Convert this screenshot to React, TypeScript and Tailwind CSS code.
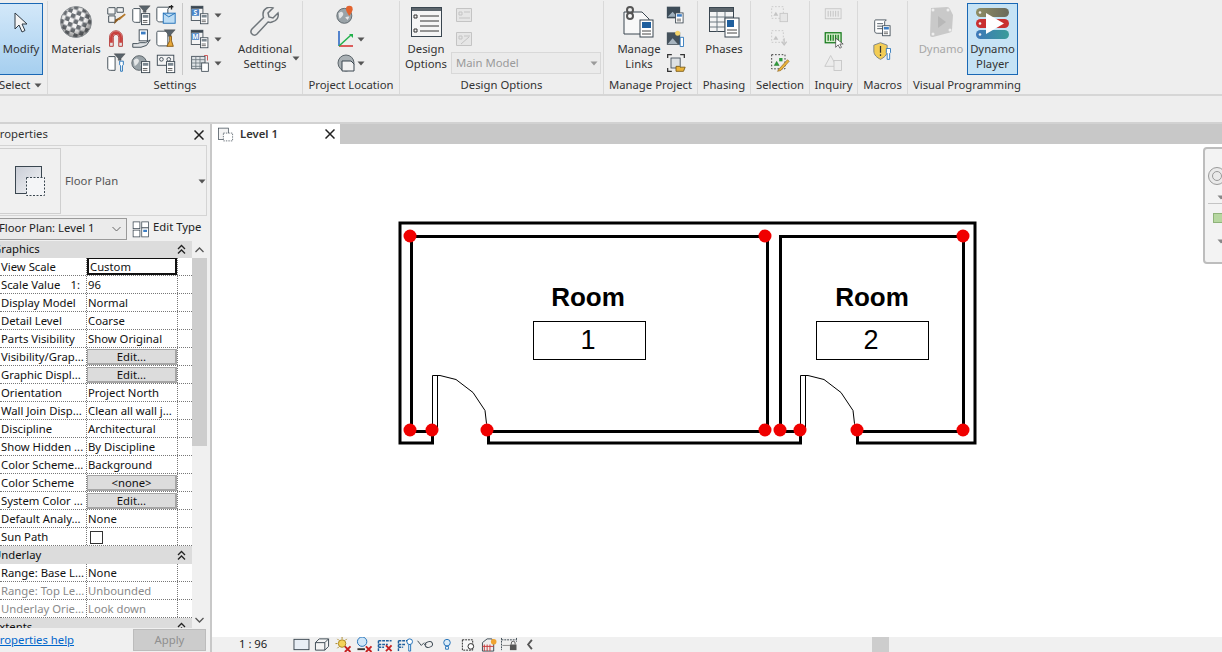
import React from 'react';

const font = "font-['Noto_Sans','Liberation_Sans',sans-serif]";

const Arrow = ({ color = '#555' }: { color?: string }) => (
  <svg width="8" height="5" viewBox="0 0 8 5" className="shrink-0">
    <path d="M0.5 0.5H7.5L4 4.5Z" fill={color} />
  </svg>
);

const Badge = ({ x = 12, y = 10, color = '#3b7dc4' }: { x?: number; y?: number; color?: string }) => (
  <g>
    <rect x={x + 0.5} y={y + 0.5} width="9" height="12" fill="#fff" stroke="#3a4650" />
    <rect x={x + 2} y={y + 2} width="6" height="3" fill={color} />
    <path d={`M${x + 2} ${y + 8}h5M${x + 2} ${y + 10}h5`} stroke="#555" />
  </g>
);

const Scroll = () => (
  <path d="M3 3.5h13l-2 2v14H5c-2 0-3-1-3-2.5V5c0-1 .5-1.5 1-1.5z" fill="#fff" stroke="#3a4650" />
);

const Funnel = ({ color = '#59636b' }: { color?: string }) => (
  <path d="M10 2h12l-4.5 5v2h-3V7z" fill={color} stroke="#444" strokeWidth="0.5" />
);

const Globe = ({ x = 12, y = 12, r = 8 }: { x?: number; y?: number; r?: number }) => (
  <g>
    <circle cx={x} cy={y} r={r} fill="#9aa3a8" stroke="#565f65" />
    <path d={`M${x - r + 2} ${y - 3}q3-3 5-1t-1 5-3 2zM${x + 1} ${y + 2}q3-2 5-1l-2 4z`} fill="#e4e6e7" />
  </g>
);

const Ic = ({ children, s = 24 }: { children: React.ReactNode; s?: number }) => (
  <svg width={s} height={s} viewBox="0 0 24 24" className="shrink-0">
    {children}
  </svg>
);

const settingsIcons: React.ReactNode[] = [
  <>
    <path d="M4 4h7v7H3V5zM13 4h7v5h-7zM4 13h7v7H4z" fill="#f4f4f4" stroke="#3a4650" />
    <path d="M22 11 13 19l-3 3 1-5 2-1z" fill="#8a5a22" />
    <path d="M22 11 15 17" stroke="#b5792b" strokeWidth="2" />
  </>,
  <>
    <path d="M4 5h7v15H6c-2 0-3-1-3-2V6z" fill="#fff" stroke="#3a4650" />
    <Funnel />
    <Badge x={12} y={10} color="#7b8790" />
  </>,
  <>
    <Scroll />
    <path d="M15 3h5M18 1v5" stroke="#222" strokeWidth="1.5" />
    <rect x="9" y="10" width="13" height="11" fill="#bcdcf4" stroke="#1f6fb7" />
    <path d="M9 10l6 4 7-4" fill="none" stroke="#1f6fb7" />
  </>,
  <>
    <path d="M5 20V10a7 7 0 0 1 14 0v10h-4V10a3 3 0 0 0-6 0v10z" fill="#e4e4e4" stroke="#b4302e" />
    <path d="M5.5 16V10a6.500 6.500 0 0 1 13 0v6h-3V10a3.500 3.500 0 0 0-7 0v6z" fill="#c9403d" />
  </>,
  <>
    <rect x="10" y="2" width="9" height="12" fill="#fff" stroke="#3a4650" />
    <rect x="12" y="4" width="5" height="3" fill="#3b7dc4" />
    <path d="M3 17h5l3-1h6l5-3-4 6-6 2H3z" fill="#dfe2e4" stroke="#3a4650" />
  </>,
  <>
    <Scroll />
    <Funnel />
    <path d="M16 9v5l-3 6h7l-2-6V9z" fill="#e8a93a" stroke="#8a5a12" />
  </>,
  <>
    <path d="M4 5h7v15H6c-2 0-3-1-3-2V6z" fill="#fff" stroke="#3a4650" />
    <Funnel />
    <path d="M16 10h4v4l-1 1v6h-2v-6l-1-1z" fill="#fff" stroke="#1f6fb7" />
  </>,
  <>
    <Globe x={10} y={12} r={8} />
    <Badge x={12} y={10} color="#7b8790" />
  </>,
  <>
    <rect x="2.500" y="3.500" width="18" height="11" fill="#f4f4f4" stroke="#3a4650" />
    <circle cx="7" cy="8" r="2" fill="none" stroke="#3a4650" />
    <circle cx="15" cy="8" r="2" fill="none" stroke="#3a4650" />
    <Badge x={12} y={10} color="#7b8790" />
  </>,
];

const Panel = ({ w, label, children }: { w: string; label: string; children: React.ReactNode }) => (
  <div className={`${w} shrink-0 flex flex-col border-r border-[#d9d9d9] h-[93px] mt-[1px]`}>
    <div className="flex h-[76px] pt-[2px] overflow-visible">{children}</div>
    <div className="text-center text-[11.3px] leading-[16px] text-[#333] whitespace-nowrap">{label}</div>
  </div>
);

const Large = ({ w, icon, lines, muted }: { w: string; icon: React.ReactNode; lines: string[]; muted?: boolean }) => (
  <div className={`${w} shrink-0 flex flex-col items-center`}>
    <div className="h-[38px] flex items-center justify-center">{icon}</div>
    {lines.map((l) => (
      <div key={l} className={`text-[11.3px] leading-[15px] whitespace-nowrap ${muted ? 'text-[#a8a8a8]' : 'text-[#333]'}`}>
        {l}
      </div>
    ))}
  </div>
);

const SmallCol = ({ w, items }: { w: string; items: React.ReactNode[] }) => (
  <div className={`${w} shrink-0 flex flex-col`}>
    {items.map((it, i) => (
      <div key={i} className="h-[24px] flex items-center justify-center">
        {it}
      </div>
    ))}
  </div>
);

const DropRow = ({ children }: { children: React.ReactNode }) => (
  <div className="h-[24px] flex items-center">
    <div className="w-[26px] flex justify-center">{children}</div>
    <div className="ml-[1px]">
      <Arrow />
    </div>
  </div>
);

const dim = '#c4c4c4';

const SheetIcon = ({ letter }: { letter: string }) => (
  <Ic s={20}>
    <rect x="1.500" y="1.500" width="14" height="17" fill="#f4f4f4" stroke="#3a4650" />
    <rect x="1.500" y="1.500" width="14" height="3" fill="#3a4650" />
    <rect x="2" y="5" width="9" height="8" fill="#4c86c9" />
    <text x="6.500" y="12" textAnchor="middle" fill="#fff" className="text-[8px] font-bold">
      {letter}
    </text>
    <Badge x={12} y={10} color="#7b8790" />
  </Ic>
);

const Ribbon = () => (
  <div className="h-[96px] flex bg-[#eeeeee] border-b-2 border-[#d6d6d6]">
    <div className="w-[48px] shrink-0 flex flex-col border-r border-[#d9d9d9] h-[93px] mt-[1px]">
      <div className="h-[76px] pt-[2px]">
        <div className="w-[43px] h-[72px] bg-gradient-to-b from-[#d3e8f9] to-[#a6cfef] border border-[#1a68b5] border-l-0 flex flex-col items-center">
          <div className="h-[37px] flex items-center">
            <svg width="14" height="22" viewBox="0 0 14 22">
              <path d="M1 1v16l4-4 3 7 3-1.500-3-6.500h5z" fill="#f5f5f5" stroke="#2e3a44" />
            </svg>
          </div>
          <div className="text-[11.3px] leading-[15px] text-[#333]">Modify</div>
        </div>
      </div>
      <div className="flex items-center justify-between pr-[5px] text-[11.3px] leading-[16px] text-[#333] -ml-[1px]">
        Select
        <Arrow />
      </div>
    </div>

    <Panel w="w-[255px]" label="Settings">
      <div className="w-full flex">
        <Large
          w="w-[56px]"
          lines={['Materials']}
          icon={
            <svg width="32" height="32" viewBox="0 0 32 32">
              <defs>
                <pattern id="chk" width="9" height="9" patternUnits="userSpaceOnUse" patternTransform="rotate(20 16 16)">
                  <rect width="9" height="9" fill="#f4f4f4" />
                  <rect width="4.500" height="4.500" fill="#6a6f74" />
                  <rect x="4.500" y="4.500" width="4.500" height="4.500" fill="#6a6f74" />
                </pattern>
                <radialGradient id="shade" cx="0.45" cy="0.4" r="0.62">
                  <stop offset="0.55" stopColor="#000" stopOpacity="0" />
                  <stop offset="1" stopColor="#333" stopOpacity="0.55" />
                </radialGradient>
              </defs>
              <circle cx="16" cy="16" r="15.500" fill="url(#chk)" />
              <circle cx="16" cy="16" r="15.500" fill="url(#shade)" stroke="#8a8f93" />
            </svg>
          }
        />
        <div className="grid grid-cols-3 grid-rows-3 w-[74px] h-[72px]">
          {settingsIcons.map((ic, i) => (
            <div key={i} className="flex items-center justify-center">
              <Ic s={22}>{ic}</Ic>
            </div>
          ))}
        </div>
        <div className="w-[4px]" />
        <div className="w-[1px] h-[72px] bg-[#c8c8c8]" />
        <div className="ml-[4px] w-[38px] flex flex-col">
          <DropRow>
            <SheetIcon letter="S" />
          </DropRow>
          <DropRow>
            <SheetIcon letter="M" />
          </DropRow>
          <DropRow>
            <Ic s={20}>
              <rect x="2" y="4" width="16" height="15" fill="#dfe3e6" stroke="#3a4650" />
              <path d="M2 8h16M2 12h16M2 16h16M7 4v15M12 4v15" stroke="#6d7880" />
              <rect x="14" y="12" width="8" height="10" fill="#fff" stroke="#3a4650" />
              <path d="M17 3h4v6" stroke="#c94040" fill="none" />
            </Ic>
          </DropRow>
        </div>
        <div className="relative flex-1">
          <Large
            w="w-[66px] ml-[7px]"
            lines={['Additional', 'Settings']}
            icon={
              <svg width="30" height="30" viewBox="0 0 30 30">
                <path
                  d="M28 6l-5 5-4-1-1-4 5-5c-5-2-10 1-10 6 0 1.500 0 2.500.5 3.500L2 22c-2 2.500-1 4 0 5s3 2 5 0L18 15c1.500.5 3 .5 4 0 5-1 7-5 6-9z"
                  fill="#ececec"
                  stroke="#6f767b"
                  strokeWidth="1.500"
                />
              </svg>
            }
          />
          <div className="absolute left-[67px] top-[53px]">
            <Arrow />
          </div>
        </div>
      </div>
    </Panel>

    <Panel w="w-[97px]" label="Project Location">
      <div className="w-full flex flex-col pl-[33px]">
        <div className="h-[24px] flex items-center">
          <Ic s={20}>
            <Globe x={10} y={13} r={9} />
            <path d="M16 1a4 4 0 0 1 4 4c0 3-4 8-4 8s-4-5-4-8a4 4 0 0 1 4-4z" fill="#e2632e" />
          </Ic>
        </div>
        <div className="h-[24px] flex items-center">
          <div className="w-[20px] flex justify-center">
            <svg width="18" height="18" viewBox="0 0 18 18">
              <path d="M2 1v15" stroke="#1f5fc2" strokeWidth="1.500" />
              <path d="M2 16h14" stroke="#d62b2b" strokeWidth="1.500" />
              <path d="M2 16 14 5" stroke="#22b14c" strokeWidth="1.500" />
              <path d="M12 4h4v4z" fill="#22b14c" />
            </svg>
          </div>
          <div className="ml-[1px]">
            <Arrow />
          </div>
        </div>
        <div className="h-[24px] flex items-center">
          <div className="w-[20px] flex justify-center">
            <svg width="18" height="18" viewBox="0 0 18 18">
              <circle cx="9" cy="9" r="8" fill="#aab1b5" stroke="#5c656b" />
              <path d="M5 7h9l3 3v7H5z" fill="#f2f2f2" stroke="#3a4650" />
            </svg>
          </div>
          <div className="ml-[1px]">
            <Arrow />
          </div>
        </div>
      </div>
    </Panel>

    <Panel w="w-[204px]" label="Design Options">
      <div className="w-full flex relative">
        <Large
          w="w-[52px]"
          lines={['Design', 'Options']}
          icon={
            <svg width="31" height="31" viewBox="0 0 31 31">
              <rect x="0.500" y="0.500" width="30" height="29" fill="#f5f5f5" stroke="#3a4650" />
              <rect x="1" y="1" width="29" height="3" fill="#5d666d" />
              <path d="M3 8h3v3H3zM3 22h3v3H3z" fill="none" stroke="#333" />
              <path d="M9 9h19M9 14h19M9 19h19M9 24h19" stroke="#333" />
            </svg>
          }
        />
        <div className="w-[24px] flex flex-col items-center">
          <div className="h-[24px] flex items-center">
            <svg width="16" height="16" viewBox="0 0 16 16">
              <path d="M.5 1.500h15v13H.5z" fill="#e6e6e6" stroke={dim} />
              <path d="M3 5h3v3H3zM8 5h6M3 11h11" stroke={dim} fill="none" />
            </svg>
          </div>
          <div className="h-[24px] flex items-center">
            <svg width="16" height="16" viewBox="0 0 16 16">
              <path d="M.5 1.500h15v13H.5z" fill="#e6e6e6" stroke={dim} />
              <path d="M3 5h3v3H3zM8 5h6M5 13 13 6" stroke={dim} fill="none" />
            </svg>
          </div>
        </div>
        <div className="absolute left-[51px] top-[49px] w-[150px] h-[22px] border border-[#d8d8d8] bg-[#ebebeb] flex items-center justify-between pl-[4px] pr-[2px] text-[11.3px] text-[#9a9a9a]">
          Main Model
          <Arrow color="#9a9a9a" />
        </div>
      </div>
    </Panel>

    <Panel w="w-[94px]" label="Manage Project">
      <div className="w-full flex">
        <Large
          w="w-[62px] ml-[4px]"
          lines={['Manage', 'Links']}
          icon={
            <svg width="32" height="32" viewBox="0 0 32 32">
              <path d="M1 6h18l7 7v15H1z" fill="#f8f8f8" stroke="#3a4650" />
              <circle cx="7" cy="4" r="3" fill="none" stroke="#555" strokeWidth="2" />
              <circle cx="7" cy="10" r="3" fill="none" stroke="#555" strokeWidth="2" />
              <rect x="17" y="14" width="13" height="17" fill="#fff" stroke="#3a4650" />
              <rect x="19" y="16" width="9" height="6" fill="#1f5f9e" />
              <path d="M19 25h9M19 28h9" stroke="#444" />
            </svg>
          }
        />
        <SmallCol
          w="w-[12px]"
          items={[
            <Ic key="a" s={20}>
              <rect x="1" y="2" width="16" height="14" fill="#3d4c58" />
              <path d="M2 14l6-6 5 6z" fill="#9fb0bd" />
              <Badge x={11} y={9} />
            </Ic>,
            <Ic key="b" s={20}>
              <rect x="1" y="4" width="16" height="15" fill="#45525c" />
              <path d="M2 18l6-7 6 7z" fill="#a7b4be" />
              <circle cx="14" cy="5" r="3" fill="#f5d46a" />
              <path d="M17 10h4v11h-4z" fill="#fff" stroke="#1f6fb7" />
            </Ic>,
            <Ic key="c" s={20}>
              <path d="M2 6V2h5M17 2h5v4M2 18v4h5" fill="none" stroke="#333" strokeWidth="1.500" />
              <rect x="6" y="6" width="11" height="12" fill="#dde1e3" stroke="#3a4650" />
              <path d="M12 16h4l1 1h6l-2 5H12z" fill="#e9b33a" stroke="#76540f" />
            </Ic>,
          ]}
        />
      </div>
    </Panel>

    <Panel w="w-[53px]" label="Phasing">
      <Large
        w="w-full"
        lines={['Phases']}
        icon={
          <svg width="31" height="31" viewBox="0 0 31 31">
            <rect x="0.500" y="0.500" width="24" height="24" fill="#f4f4f4" stroke="#3a4650" />
            <rect x="1" y="1" width="23" height="4" fill="#5d666d" />
            <path d="M1 10h23M1 15h23M1 20h23M8 5v20M16 5v20" stroke="#6d7880" />
            <rect x="16" y="11" width="14" height="19" fill="#fff" stroke="#3a4650" />
            <rect x="18" y="13" width="7" height="7" fill="#1f5f9e" />
            <path d="M18 23h10M18 26h10" stroke="#444" />
          </svg>
        }
      />
    </Panel>

    <Panel w="w-[59px]" label="Selection">
      <SmallCol
        w="w-full"
        items={[
          <Ic key="a" s={20}>
            <rect x="2" y="2" width="14" height="14" fill="none" stroke={dim} strokeDasharray="2 2" />
            <path d="M4 13l3-5 3 5z" fill={dim} />
            <rect x="12" y="10" width="9" height="10" fill="#e6e6e6" stroke={dim} />
          </Ic>,
          <Ic key="b" s={20}>
            <rect x="2" y="2" width="14" height="14" fill="none" stroke={dim} strokeDasharray="2 2" />
            <path d="M4 13l3-5 3 5z" fill={dim} />
            <path d="M17 11v6M14 15l3 4 3-4" stroke={dim} fill="none" strokeWidth="1.500" />
          </Ic>,
          <Ic key="c" s={20}>
            <rect x="2" y="2" width="16" height="17" fill="none" stroke="#222" strokeDasharray="2 2" />
            <path d="M5 15l3-5 3 5z" fill="#2f9c3b" stroke="#1a6a24" strokeWidth="0.500" />
            <rect x="11" y="6" width="4" height="4" fill="#2f9c3b" />
            <path d="M21 8 11 19l-2 3 4-1L23 10z" fill="#e9b33a" stroke="#8a5a12" strokeWidth="0.700" />
          </Ic>,
        ]}
      />
    </Panel>

    <Panel w="w-[48px]" label="Inquiry">
      <SmallCol
        w="w-full"
        items={[
          <Ic key="a" s={20}>
            <rect x="1.500" y="4.500" width="19" height="12" fill="#ececec" stroke={dim} />
            <path d="M5 7v7M8 7v7M11 7v7M14 7v7M17 7v7" stroke={dim} strokeWidth="1.200" />
          </Ic>,
          <Ic key="b" s={20}>
            <rect x="1.500" y="4.500" width="19" height="12" fill="#d5eccb" stroke="#157a1b" strokeWidth="1.500" />
            <path d="M5 7v7M8 7v7M11 7v7M14 7v7M17 7v7" stroke="#157a1b" strokeWidth="1.500" />
            <path d="M14 11v11l3-3 2 4 2-1-2-4h4z" fill="#fff" stroke="#333" strokeWidth="0.800" />
          </Ic>,
          <Ic key="c" s={20}>
            <path d="M8 3 15 16H1z" fill="#ececec" stroke={dim} />
            <rect x="12" y="9" width="9" height="12" fill="#ececec" stroke={dim} />
          </Ic>,
        ]}
      />
    </Panel>

    <Panel w="w-[50px]" label="Macros">
      <div className="w-full flex flex-col items-center pt-[12px]">
        <div className="h-[24px] flex items-center">
          <Ic s={20}>
            <Scroll />
            <path d="M5 8h7M5 11h7M5 14h7" stroke="#3a4650" />
            <Badge x={11} y={10} />
          </Ic>
        </div>
        <div className="h-[24px] flex items-center">
          <Ic s={20}>
            <path d="M9 2l8 3v7c0 5-4 8-8 10-4-2-8-5-8-10V5z" fill="#f3cd55" stroke="#6d7880" />
            <path d="M9 6v8M9 16v2" stroke="#333" strokeWidth="1.500" />
            <path d="M16 9h5v5l-1 1v7h-3v-7l-1-1z" fill="#fff" stroke="#1f6fb7" />
          </Ic>
        </div>
      </div>
    </Panel>

    <div className="w-[118px] shrink-0 flex flex-col h-[93px] mt-[1px]">
      <div className="flex h-[76px] pt-[2px] pl-[7px]">
        <Large
          w="w-[52px]"
          muted
          lines={['Dynamo']}
          icon={
            <svg width="26" height="32" viewBox="0 0 26 32">
              <path d="M3 2 19 1q2 0 3 2l3 6-1 15q0 2-2 2.500L5 31q-3 .5-3-2z" fill="#c9c9c9" />
              <path d="M10 10l8 6-8 6z" fill="#b8b8b8" />
              <circle cx="5" cy="4" r="1.500" fill="#eee" />
              <circle cx="20" cy="4" r="1.500" fill="#eee" />
              <circle cx="22" cy="24" r="1.500" fill="#eee" />
              <circle cx="5" cy="28" r="1.500" fill="#eee" />
            </svg>
          }
        />
        <div className="w-[51px] h-[72px] bg-[#c6e3f5] border border-[#1a68b5] flex flex-col items-center">
          <div className="h-[37px] flex items-center">
            <svg width="33" height="32" viewBox="0 0 33 32">
              <defs>
                <linearGradient id="dp1" x1="0" x2="1" y1="0" y2="0">
                  <stop offset="0" stopColor="#8f8d63" />
                  <stop offset="1" stopColor="#6a6a5c" />
                </linearGradient>
                <linearGradient id="dp3" x1="0" x2="1" y1="0" y2="0">
                  <stop offset="0" stopColor="#3d78b8" />
                  <stop offset="1" stopColor="#3a9c9a" />
                </linearGradient>
              </defs>
              <rect x="0" y="1" width="33" height="9" rx="4.500" fill="url(#dp1)" />
              <rect x="0" y="12" width="33" height="9" rx="4.500" fill="#c93030" />
              <rect x="0" y="23" width="33" height="9" rx="4.500" fill="url(#dp3)" />
              <path d="M10 6 28 16.500 10 27z" fill="#fff" />
              <circle cx="4" cy="5.500" r="1.300" fill="#eee" />
              <circle cx="4" cy="16.500" r="1.300" fill="#eee" />
              <circle cx="4" cy="27.500" r="1.300" fill="#eee" />
            </svg>
          </div>
          <div className="text-[11.3px] leading-[15px] text-[#333]">Dynamo</div>
          <div className="text-[11.3px] leading-[15px] text-[#333]">Player</div>
        </div>
      </div>
      <div className="text-center text-[11.3px] leading-[16px] text-[#333] whitespace-nowrap">Visual Programming</div>
    </div>
    <div className="flex-1" />
  </div>
);

type Row = { label: string; value?: string; button?: string; check?: boolean; focus?: boolean; muted?: boolean; extra?: string };

const graphics: Row[] = [
  { label: 'View Scale', value: 'Custom', focus: true },
  { label: 'Scale Value', extra: '1:', value: '96' },
  { label: 'Display Model', value: 'Normal' },
  { label: 'Detail Level', value: 'Coarse' },
  { label: 'Parts Visibility', value: 'Show Original' },
  { label: 'Visibility/Grap...', button: 'Edit...' },
  { label: 'Graphic Displ...', button: 'Edit...' },
  { label: 'Orientation', value: 'Project North' },
  { label: 'Wall Join Disp...', value: 'Clean all wall j...' },
  { label: 'Discipline', value: 'Architectural' },
  { label: 'Show Hidden ...', value: 'By Discipline' },
  { label: 'Color Scheme...', value: 'Background' },
  { label: 'Color Scheme', button: '<none>' },
  { label: 'System Color ...', button: 'Edit...' },
  { label: 'Default Analy...', value: 'None' },
  { label: 'Sun Path', check: true },
];

const underlay: Row[] = [
  { label: 'Range: Base L...', value: 'None' },
  { label: 'Range: Top Le...', value: 'Unbounded', muted: true },
  { label: 'Underlay Orie...', value: 'Look down', muted: true },
];

const PropRow = ({ row }: { row: Row }) => (
  <div className={`flex h-[18px] border-b border-dotted border-[#777] text-[11.3px] leading-[18px] bg-white ${row.muted ? 'text-[#8a8a8a]' : 'text-[#111]'}`}>
    <div className="w-[86px] shrink-0 pl-[1px] pr-[6px] flex justify-between whitespace-nowrap overflow-hidden">
      <span>{row.label}</span>
      {row.extra && <span>{row.extra}</span>}
    </div>
    <div className="w-[92px] shrink-0 border-l border-r border-dotted border-[#777] whitespace-nowrap overflow-hidden relative">
      {row.button ? (
        <div className="h-[16px] mt-[1px] bg-[#dcdcdc] border border-[#a6a6a6] border-r-2 border-b-2 text-center leading-[14px]">
          {row.button}
        </div>
      ) : row.check ? (
        <div className="ml-[3px] mt-[3px] w-[13px] h-[13px] border border-[#333] bg-white" />
      ) : row.focus ? (
        <div className="h-[17px] border-2 border-[#111] border-t pl-[1px] leading-[15px]">{row.value}</div>
      ) : (
        <span className="pl-[1px]">{row.value}</span>
      )}
    </div>
  </div>
);

const Chevrons = () => (
  <svg width="9" height="11" viewBox="0 0 9 11">
    <path d="M1 5 4.500 1.500 8 5M1 9.500 4.500 6 8 9.500" fill="none" stroke="#222" strokeWidth="1.300" />
  </svg>
);

const GroupHead = ({ label, h }: { label: string; h: string }) => (
  <div className={`${h} bg-[#dcdcdc] flex items-center justify-between pr-[6px] -ml-[7px] text-[11.3px] text-[#111]`}>
    <span>{label}</span>
    <Chevrons />
  </div>
);

const Properties = () => (
  <div className="w-[212px] shrink-0 flex flex-col bg-[#f0f0f0] border-r-2 border-[#c8c8c8] overflow-hidden pr-[3px]">
    <div className="h-[21px] flex items-center justify-between pr-[3px] text-[11.3px] text-[#333] -ml-[7px]">
      Properties
      <svg width="10" height="10" viewBox="0 0 10 10">
        <path d="M.5.500l9 9M9.500.500l-9 9" stroke="#222" strokeWidth="1.500" />
      </svg>
    </div>
    <div className="h-[71px] border border-l-0 border-[#d4d4d4] flex items-center pt-[1px]">
      <div className="w-[61px] h-[66px] border border-l-0 border-[#cfcfcf] flex items-center justify-center">
        <svg width="32" height="32" viewBox="0 0 32 32">
          <defs>
            <linearGradient id="fp" x1="0" x2="1" y1="0" y2="1">
              <stop offset="0" stopColor="#c9cdd6" />
              <stop offset="1" stopColor="#f3f4f6" />
            </linearGradient>
          </defs>
          <rect x="1.500" y="1.500" width="26" height="27" fill="url(#fp)" stroke="#3a4650" />
          <rect x="12.500" y="12.500" width="18" height="18" fill="#f4f5f7" stroke="#3a4650" strokeDasharray="2 1.500" />
        </svg>
      </div>
      <div className="ml-[4px] flex-1 flex items-center justify-between text-[11.3px] text-[#555]">
        Floor Plan
        <Arrow />
      </div>
    </div>
    <div className="h-[25px] flex items-center">
      <div className="w-[127px] h-[22px] border border-l-0 border-[#9a9a9a] bg-[#ebebeb] flex items-center justify-between pr-[5px] text-[11.3px] text-[#222] whitespace-nowrap">
        <span className="-ml-[1px]">Floor Plan: Level 1</span>
        <svg width="9" height="6" viewBox="0 0 9 6">
          <path d="M.5 1 4.500 5 8.500 1" fill="none" stroke="#666" />
        </svg>
      </div>
      <div className="ml-[5px]">
        <Ic s={18}>
          <rect x="1.500" y="2.500" width="9" height="9" fill="#fff" stroke="#3a4650" />
          <rect x="1.500" y="13.500" width="9" height="9" fill="#fff" stroke="#3a4650" />
          <rect x="13" y="2.500" width="9" height="8" fill="#fff" stroke="#3a4650" />
          <rect x="13" y="10.500" width="9" height="12" fill="#fff" stroke="#3a4650" />
          <rect x="15" y="13" width="5" height="3" fill="#3b7dc4" />
        </Ic>
      </div>
      <span className="ml-[3px] text-[11.3px] text-[#222] whitespace-nowrap -mt-[2px]">Edit Type</span>
    </div>
    <div className="flex h-[387px]">
      <div className="w-[192px] shrink-0 overflow-hidden">
        <GroupHead label="Graphics" h="h-[17px]" />
        {graphics.map((r) => (
          <PropRow key={r.label} row={r} />
        ))}
        <GroupHead label="Underlay" h="h-[18px]" />
        {underlay.map((r) => (
          <PropRow key={r.label} row={r} />
        ))}
        <GroupHead label="Extents" h="h-[18px]" />
      </div>
      <div className="flex-1 flex flex-col bg-[#f0f0f0]">
        <div className="h-[17px] flex items-center justify-center">
          <svg width="9" height="6" viewBox="0 0 9 6">
            <path d="M.5 5 4.500 1 8.500 5" fill="none" stroke="#555" strokeWidth="1.300" />
          </svg>
        </div>
        <div className="h-[188px] bg-[#cdcdcd]" />
        <div className="flex-1" />
        <div className="h-[17px] flex items-center justify-center">
          <svg width="9" height="6" viewBox="0 0 9 6">
            <path d="M.5 1 4.500 5 8.500 1" fill="none" stroke="#555" strokeWidth="1.300" />
          </svg>
        </div>
      </div>
    </div>
    <div className="flex-1 flex items-center justify-between pr-[1px] text-[11.3px]">
      <span className="text-[#0066cc] underline -ml-[7px] whitespace-nowrap">Properties help</span>
      <div className="w-[73px] h-[22px] bg-[#cccccc] border border-[#bcbcbc] text-center leading-[20px] text-[#8f8f8f]">Apply</div>
    </div>
  </div>
);

const Door = ({ dx }: { dx: number }) => (
  <g transform={`translate(${dx} 0)`} fill="none" stroke="#000" strokeWidth="1">
    <path d="M432.500 431V375.500H437.500V431" />
    <path d="M437 375.500h3l16 4 17 13 12 18 1.500 13 .5 7" />
  </g>
);

const RoomTag = ({ cx, boxX, n }: { cx: number; boxX: number; n: string }) => (
  <g>
    <text x={cx} y="306" textAnchor="middle" className="font-['Liberation_Sans',sans-serif] font-bold text-[26px]" fill="#000">
      Room
    </text>
    <rect x={boxX + 0.5} y="321.500" width="112" height="38" fill="#fff" stroke="#000" />
    <text x={boxX + 55} y="349" textAnchor="middle" className="font-['Liberation_Sans',sans-serif] text-[27px]" fill="#000">
      {n}
    </text>
  </g>
);

const dots = [
  [410, 236],
  [765, 236],
  [963, 236],
  [410, 430],
  [432, 430],
  [487, 430],
  [765, 430],
  [780, 430],
  [800, 430],
  [857, 430],
  [963, 430],
];

const Plan = () => (
  <svg viewBox="212 144 1010 493" className="block w-full h-full">
    <path
      d="M411.500 236.500H767.500V431.500H488.500V443H800.500V431.500H780.500V236.500H963.500V431.500H857.500V443H975V223H400V443H432.500V431.500H411.500Z"
      fill="none"
      stroke="#000"
      strokeWidth="3"
    />
    <Door dx={0} />
    <Door dx={368} />
    <RoomTag cx={588} boxX={533} n="1" />
    <RoomTag cx={872} boxX={816} n="2" />
    {dots.map(([x, y]) => (
      <circle key={`${x}-${y}`} cx={x} cy={y} r="6.500" fill="#f00000" />
    ))}
  </svg>
);

const statusIcons: React.ReactNode[] = [
  <rect key="1" x="2.500" y="4.500" width="16" height="11" fill="#e8eef5" stroke="#3a4650" />,
  <path key="2" d="M3 8h10v8H3zM3 8l4-4h10v8l-4 4M13 8l4-4" fill="#f4f4f4" stroke="#3a4650" />,
  <g key="3">
    <circle cx="9" cy="9" r="4" fill="#f3d35a" stroke="#a88320" />
    <path d="M9 2v2M2 9h2M4 4l1.500 1.500M14 4l-1.500 1.500M4 14l1.500-1.500" stroke="#a88320" />
    <path d="M12 12l6 6M18 12l-6 6" stroke="#c42020" strokeWidth="2" />
  </g>,
  <g key="4">
    <circle cx="8" cy="7" r="5" fill="#cfe6f8" stroke="#1f6fb7" />
    <path d="M3 15h8" stroke="#333" strokeWidth="2" />
    <path d="M12 12l6 6M18 12l-6 6" stroke="#c42020" strokeWidth="2" />
  </g>,
  <g key="5">
    <path d="M3 6h14M3 6v11M3 10h10M3 13h6" stroke="#1f5f9e" strokeWidth="1.500" fill="none" strokeDasharray="3 1" />
    <path d="M11 11l6 6M17 11l-6 6" stroke="#c42020" strokeWidth="2" />
  </g>,
  <g key="6">
    <path d="M3 6h12M3 6v11M3 10h8M3 13h5" stroke="#1f5f9e" strokeWidth="1.500" fill="none" strokeDasharray="3 1" />
    <circle cx="15" cy="7" r="3" fill="#fff" stroke="#1f6fb7" />
    <path d="M14 10h2v7h-2z" fill="#fff" stroke="#1f6fb7" />
  </g>,
  <g key="7" fill="none" stroke="#3a4650">
    <path d="M1 6l4 5 3-3" />
    <ellipse cx="13" cy="10" rx="4" ry="3" transform="rotate(-20 13 10)" />
    <path d="M8 10q2-1 2 0" />
  </g>,
  <g key="8">
    <circle cx="10" cy="8" r="3.500" fill="#dcecf8" stroke="#1f6fb7" />
    <path d="M8.500 12h3v3h-3z" fill="#fff" stroke="#1f6fb7" />
  </g>,
  <g key="9">
    <rect x="4" y="5" width="11" height="11" fill="#f6f6f6" stroke="#222" strokeDasharray="2 1" />
    <circle cx="13" cy="12" r="3" fill="#fff" stroke="#222" />
  </g>,
  <g key="10">
    <path d="M3 8l5-4h5l2 4v9H3z" fill="#eee" stroke="#3a4650" />
    <path d="M5 10v7M8 10v7M11 10v7M3 12h12" stroke="#c93a3a" />
    <circle cx="15" cy="7" r="3" fill="#f0a32f" />
  </g>,
  <g key="11">
    <path d="M2 3v13M18 3v4M2 5h16" stroke="#3a4650" fill="none" strokeDasharray="2 1" />
    <path d="M3 11h8" stroke="#888" />
    <rect x="11" y="10" width="7" height="6" fill="#555" />
    <path d="M12.500 10V8.500a2 2 0 0 1 4 0V10" fill="none" stroke="#555" />
  </g>,
  <path key="12" d="M12 5 8 10l4 5" fill="none" stroke="#555" strokeWidth="2" />,
];

const StatusBar = () => (
  <div className="h-[15px] bg-[#f0f0f0] flex items-center text-[11.3px] text-[#222]">
    <span className="ml-[27px] w-[52px] whitespace-nowrap">1 : 96</span>
    <div className="flex">
      {statusIcons.map((ic, i) => (
        <div key={i} className="w-[20.800px] h-[15px] flex items-center justify-center">
          <svg width="20" height="15" viewBox="0 2 20 16">
            {ic}
          </svg>
        </div>
      ))}
    </div>
    <div className="ml-[331px] w-[17px] h-[15px] bg-[#cdcdcd]" />
  </div>
);

const View = () => (
  <div className="flex-1 flex flex-col min-w-0">
    <div className="h-[20px] bg-[#c8c8c8] flex shrink-0">
      <div className="w-[128px] h-[20px] bg-white flex items-center pl-[5px] pr-[5px]">
        <Ic s={17}>
          <rect x="2" y="3" width="14" height="16" fill="#f4f4f4" stroke="#3a4650" />
          <rect x="9" y="10" width="13" height="11" fill="#fff" stroke="#3a4650" strokeDasharray="2 1.500" />
        </Ic>
        <span className="ml-[6px] flex-1 text-[11.3px] font-semibold text-[#333]">Level 1</span>
        <svg width="10" height="10" viewBox="0 0 10 10">
          <path d="M.5.500l9 9M9.500.500l-9 9" stroke="#222" strokeWidth="1.500" />
        </svg>
      </div>
    </div>
    <div className="flex-1 relative bg-white overflow-hidden">
      <Plan />
      <div className="absolute left-[991px] top-[3px] w-[30px] h-[117px] rounded-[4px] border-2 border-[#bdbdbd] bg-[#f3f3f3]">
        <div className="absolute left-[3px] top-[18px] w-[18px] h-[18px] rounded-full border border-[#999] bg-[#eaeaea]" />
        <div className="absolute left-[7px] top-[22px] w-[10px] h-[10px] rounded-full border border-[#999]" />
        <div className="absolute left-[12px] top-[46px]">
          <Arrow color="#888" />
        </div>
        <div className="absolute left-[3px] top-[54px] w-[24px] h-[1px] bg-[#c4c4c4]" />
        <div className="absolute left-[8px] top-[64px] w-[12px] h-[10px] bg-[#b6d7a0] border border-[#8fb37a]" />
        <div className="absolute left-[12px] top-[90px]">
          <Arrow color="#888" />
        </div>
      </div>
    </div>
    <StatusBar />
  </div>
);

export default function App() {
  return (
    <div className={`${font} w-[1222px] h-[652px] overflow-hidden bg-[#eeeeee] flex flex-col`}>
      <Ribbon />
      <div className="h-[28px] shrink-0 bg-[#eeeeee] border-b-2 border-[#d2d2d2]" />
      <div className="flex-1 flex min-h-0">
        <Properties />
        <View />
      </div>
    </div>
  );
}
